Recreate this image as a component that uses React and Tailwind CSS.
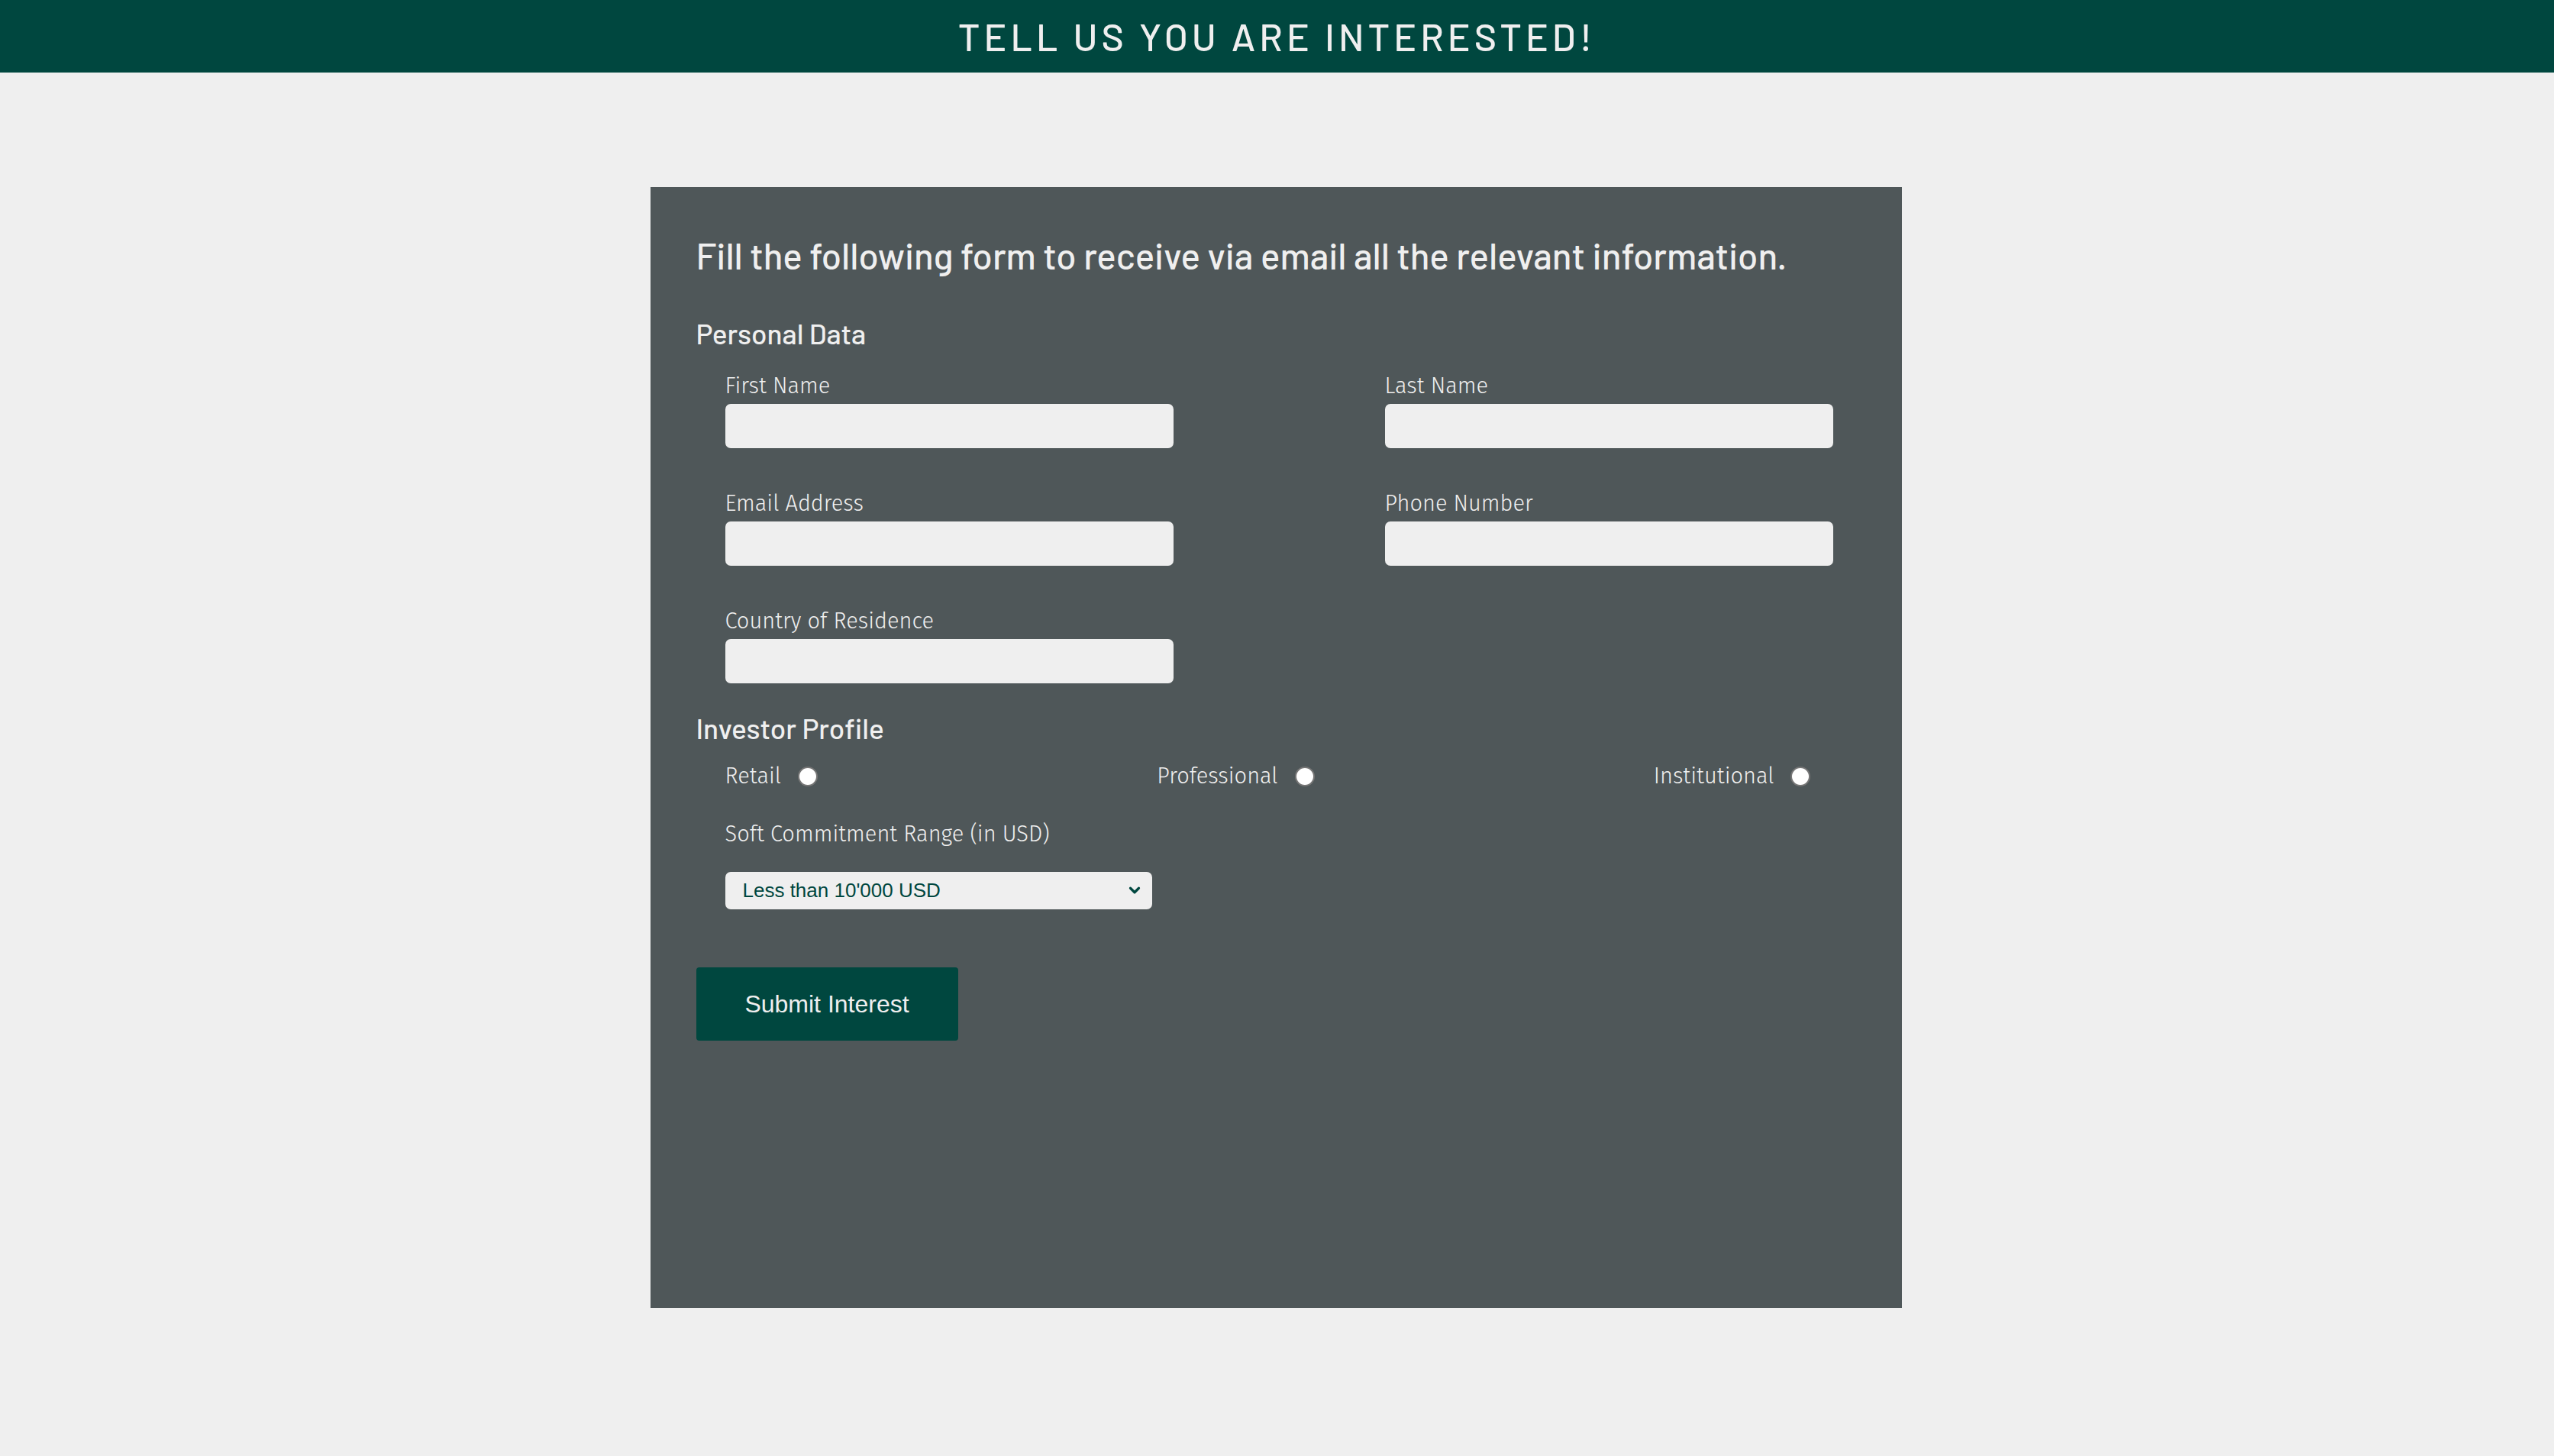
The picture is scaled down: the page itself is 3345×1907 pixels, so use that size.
import { ChevronDown } from "lucide-react";

function Field({ label }) {
  return (
    <div className="flex flex-col">
      <label className="block h-[30px] pt-[2px] text-[29px] leading-[30px] font-light text-[#efefef] font-['Fira_Sans','Open_Sans',sans-serif]">
        {label}
      </label>
      <input
        type="text"
        className="mt-[10px] h-[58px] w-[587px] rounded-[7px] bg-[#efefef] border-0 outline-none px-4 text-[26px] text-[#00473f]"
      />
    </div>
  );
}

function Radio({ label, name }) {
  return (
    <label className="flex items-center gap-[22px] h-[30px] text-[29px] leading-[30px] font-light text-[#efefef] font-['Fira_Sans','Open_Sans',sans-serif]">
      <span>{label}</span>
      <input
        type="radio"
        name={name}
        className="appearance-none shrink-0 w-[26px] h-[26px] rounded-full bg-white border-2 border-[#767676] m-0"
      />
    </label>
  );
}

export default function App() {
  return (
    <div className="min-h-[1907px] bg-[#efefef] font-['Barlow','Roboto',sans-serif]">
      <header className="h-[95px] bg-[#00473f] flex items-center justify-center">
        <h1 className="text-[50px] leading-none font-medium tracking-[5px] text-[#efefef] pb-[2px]">
          TELL US YOU ARE INTERESTED!
        </h1>
      </header>

      <main className="flex justify-center pt-[150px]">
        <div className="w-[1639px] h-[1468px] mr-[3px] bg-[#4f5759] pl-[60px] pt-[66px]">
          <h2 className="text-[47.5px] leading-none font-medium text-[#efefef]">
            Fill the following form to receive via email all the relevant information.
          </h2>

          <h3 className="mt-[59px] text-[37px] leading-none font-medium text-[#efefef]">
            Personal Data
          </h3>

          <div className="mt-[34px] ml-[38px] grid grid-cols-[864px_587px] gap-y-[56px]">
            <Field label="First Name" />
            <Field label="Last Name" />
            <Field label="Email Address" />
            <Field label="Phone Number" />
            <Field label="Country of Residence" />
          </div>

          <h3 className="mt-[40px] text-[37px] leading-none font-medium text-[#efefef]">
            Investor Profile
          </h3>

          <div className="mt-[30px] ml-[38px] w-[1422px] flex justify-between">
            <Radio label="Retail" name="profile" />
            <Radio label="Professional" name="profile" />
            <Radio label="Institutional" name="profile" />
          </div>

          <div className="mt-[46px] ml-[38px]">
            <label className="block h-[30px] text-[29px] leading-[30px] font-light text-[#efefef] font-['Fira_Sans','Open_Sans',sans-serif]">
              Soft Commitment Range (in USD)
            </label>
            <div className="relative mt-[34px] w-[559px] h-[49px]">
              <select className="appearance-none w-full h-full rounded-[7px] bg-[#efefef] border-0 outline-none pl-[23px] pr-10 text-[26px] text-[#00473f] font-['Liberation_Sans','Arial',sans-serif]">
                <option>Less than 10'000 USD</option>
                <option>10'000 - 50'000 USD</option>
                <option>50'000 - 100'000 USD</option>
                <option>More than 100'000 USD</option>
              </select>
              <ChevronDown
                className="absolute right-[12px] top-1/2 -translate-y-1/2 pointer-events-none text-[#00473f]"
                size={22}
                strokeWidth={3.5}
              />
            </div>
          </div>

          <button
            type="button"
            className="mt-[76px] w-[343px] h-[96px] rounded-[4px] bg-[#00473f] text-[#efefef] text-[32px] font-['Liberation_Sans','Arial',sans-serif]"
          >
            Submit Interest
          </button>
        </div>
      </main>
    </div>
  );
}
